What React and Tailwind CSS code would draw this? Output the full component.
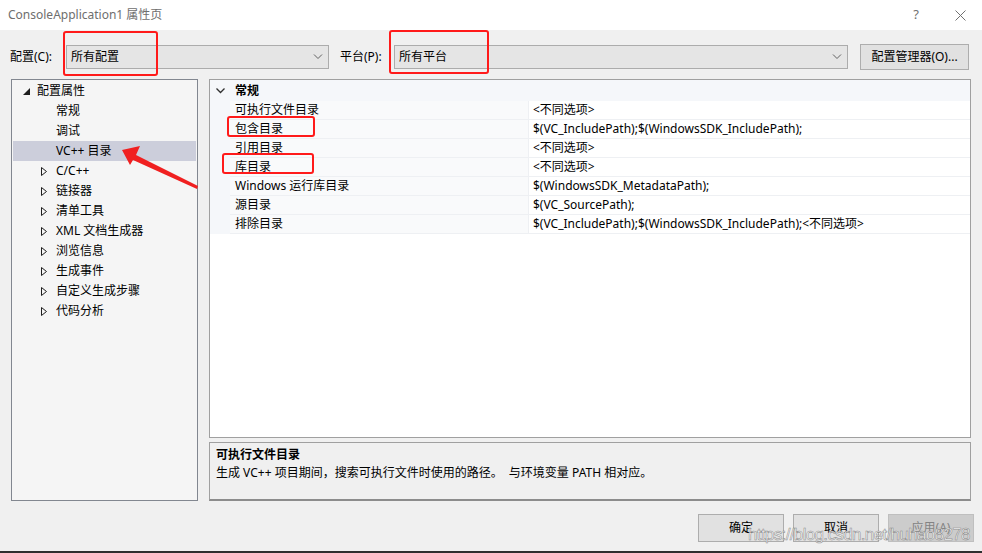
import React from "react";

const font = { fontFamily: '"Noto Sans", "Noto Sans CJK SC", sans-serif' };

const treeItems = [
  { label: "常规", level: 1 },
  { label: "调试", level: 1 },
  { label: "VC++ 目录", level: 1, selected: true },
  { label: "C/C++", level: 1, expand: true },
  { label: "链接器", level: 1, expand: true },
  { label: "清单工具", level: 1, expand: true },
  { label: "XML 文档生成器", level: 1, expand: true },
  { label: "浏览信息", level: 1, expand: true },
  { label: "生成事件", level: 1, expand: true },
  { label: "自定义生成步骤", level: 1, expand: true },
  { label: "代码分析", level: 1, expand: true },
];

const rows = [
  ["可执行文件目录", "<不同选项>"],
  ["包含目录", "$(VC_IncludePath);$(WindowsSDK_IncludePath);"],
  ["引用目录", "<不同选项>"],
  ["库目录", "<不同选项>"],
  ["Windows 运行库目录", "$(WindowsSDK_MetadataPath);"],
  ["源目录", "$(VC_SourcePath);"],
  ["排除目录", "$(VC_IncludePath);$(WindowsSDK_IncludePath);<不同选项>"],
];

function Chevron() {
  return (
    <svg width="10" height="6" viewBox="0 0 10 6" className="shrink-0">
      <path d="M1 0.5 L5 4.5 L9 0.5" fill="none" stroke="#606060" strokeWidth="1" />
    </svg>
  );
}

function Combo({ text, className }) {
  return (
    <div className={`h-[24px] bg-[#e5e5e5] border border-[#acacac] flex items-center justify-between pl-[4px] pr-[5px] ${className}`}>
      <span className="text-[12px] text-black">{text}</span>
      <Chevron />
    </div>
  );
}

export default function App() {
  return (
    <div className="relative w-[982px] h-[553px] flex flex-col overflow-hidden bg-[#f0f0f0] text-[12px] text-black" style={font}>
      {/* title bar */}
      <div className="h-[30px] bg-white flex items-center justify-between pl-[8px] pr-[16px] shrink-0">
        <span className="text-[12px] text-[#6e6e6e]">ConsoleApplication1 属性页</span>
        <div className="flex items-center gap-[36px] text-[#707070]">
          <span className="text-[13px]">?</span>
          <svg width="11" height="11" viewBox="0 0 11 11">
            <path d="M0.5 0.5 L10.5 10.5 M10.5 0.5 L0.5 10.5" stroke="#707070" strokeWidth="1" />
          </svg>
        </div>
      </div>

      {/* config row */}
      <div className="flex items-center h-[26px] mt-[14px] pl-[10px] shrink-0">
        <span className="w-[56px]">配置(C):</span>
        <Combo text="所有配置" className="w-[263px]" />
        <span className="ml-[11px] w-[54px]">平台(P):</span>
        <Combo text="所有平台" className="w-[454px]" />
        <div className="ml-[12px] w-[109px] h-[26px] bg-[#e1e1e1] border border-[#adadad] flex items-center justify-center">
          配置管理器(O)...
        </div>
      </div>

      {/* main area */}
      <div className="flex mt-[9px] pl-[11px] h-[422px] shrink-0">
        {/* tree */}
        <div className="w-[187px] h-full bg-[#f5f5f5] border border-[#828790] pt-[1px] px-[1px]">
          <div className="h-[20px] flex items-center">
            <svg width="7" height="7" viewBox="0 0 7 7" className="ml-[10px] mr-[7px]">
              <path d="M7 0 L7 7 L0 7 Z" fill="#1e1e1e" />
            </svg>
            <span>配置属性</span>
          </div>
          {treeItems.map((it) => (
            <div key={it.label} className={`h-[20px] flex items-center ${it.selected ? "bg-[#cccedb]" : ""}`}>
              <div className="w-[43px] flex justify-end pr-[9px]">
                {it.expand && (
                  <svg width="6" height="9" viewBox="0 0 6 9">
                    <path d="M0.5 0.5 L5.5 4.5 L0.5 8.5 Z" fill="none" stroke="#1e1e1e" strokeWidth="1" />
                  </svg>
                )}
              </div>
              <span>{it.label}</span>
            </div>
          ))}
        </div>

        {/* right column */}
        <div className="ml-[11px] w-[762px] flex flex-col">
          <div className="h-[359px] bg-white border border-[#a0a0a0] flex flex-col">
            <div className="h-[21px] bg-[#f5f7fa] flex items-center">
              <svg width="9" height="6" viewBox="0 0 9 6" className="ml-[6px] mr-[10px]">
                <path d="M0.5 0.5 L4.5 4.5 L8.5 0.5" fill="none" stroke="#303030" strokeWidth="1.3" />
              </svg>
              <span className="font-bold">常规</span>
            </div>
            {rows.map(([k, v]) => (
              <div key={k} className="h-[19px] flex">
                <div className="w-[20px] bg-[#f5f7fa]" />
                <div className="w-[299px] bg-[#f9fafb] border-b border-[#eef0f3] border-r border-r-[#eef0f3] flex items-center pl-[5px]">
                  {k}
                </div>
                <div className="flex-1 border-b border-[#eef0f3] flex items-center pl-[4px]">{v}</div>
              </div>
            ))}
          </div>
          <div className="mt-[4px] h-[59px] bg-[#f0f0f0] border border-[#a0a0a0] border-b-2 border-b-[#8c8c8c] px-[6px] pt-[3px]">
            <div className="font-bold leading-[18px]">可执行文件目录</div>
            <div className="leading-[18px] whitespace-pre">生成 VC++ 项目期间，搜索可执行文件时使用的路径。  与环境变量 PATH 相对应。</div>
          </div>
        </div>
      </div>

      {/* buttons */}
      <div className="flex justify-end pr-[8px] mt-[13px] gap-[9px] shrink-0">
        <div className="w-[86px] h-[28px] bg-[#e1e1e1] border border-[#adadad] flex items-center justify-center">确定</div>
        <div className="w-[86px] h-[28px] bg-[#e1e1e1] border border-[#adadad] flex items-center justify-center">取消</div>
        <div className="w-[86px] h-[28px] bg-[#cccccc] border border-[#bfbfbf] flex items-center justify-center text-[#838383]">应用(A)</div>
      </div>

      <div className="absolute left-0 right-0 bottom-0 h-[2px] bg-[#2f2f2f]" />

      {/* annotations */}
      <div className="absolute left-[63px] top-[31px] w-[95px] h-[45px] border-[2px] border-[#ff1a1a] rounded-[3px]" />
      <div className="absolute left-[389px] top-[30px] w-[100px] h-[44px] border-[2px] border-[#ff1a1a] rounded-[3px]" />
      <div className="absolute left-[227px] top-[116px] w-[88px] h-[21px] border-[2px] border-[#ff1a1a] rounded-[3px]" />
      <div className="absolute left-[222px] top-[153px] w-[92px] h-[21px] border-[2px] border-[#ff1a1a] rounded-[3px]" />
      <svg className="absolute left-0 top-0" width="982" height="553" viewBox="0 0 982 553" style={{ pointerEvents: "none" }}>
        <polygon points="122,150 140,146 136,155 198,186 197,189 133,160 130,165" fill="#f02020" />
      </svg>

      {/* watermark */}
      <div
        className="absolute left-[748px] top-[525px] text-[17px] leading-[20px] tracking-[-0.65px] text-white/85 whitespace-nowrap"
        style={{ fontFamily: '"Liberation Sans", sans-serif', WebkitTextStroke: "0.6px rgba(110,110,110,0.75)" }}
      >
        https://blog.csdn.net/huhao8278
      </div>
    </div>
  );
}
